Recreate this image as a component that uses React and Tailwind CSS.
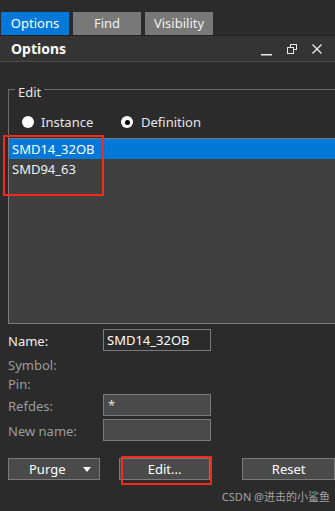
export default function App() {
  return (
    <div className="relative w-[335px] h-[511px] overflow-hidden bg-[#2b2b2b] text-[13px] text-[#e6e6e6] font-['Noto_Sans',sans-serif]">
      {/* Tabs */}
      <div className="flex gap-[4px] pl-[1px] mt-[12px] h-[23px]">
        <div className="w-[68px] bg-[#0078d7] flex items-center justify-center pt-[1px] text-white">Options</div>
        <div className="w-[68px] bg-[#787878] flex items-center justify-center pt-[1px] text-[#f0f0f0]">Find</div>
        <div className="w-[68px] bg-[#787878] flex items-center justify-center pt-[1px] text-[#f0f0f0]">Visibility</div>
      </div>

      {/* Panel header */}
      <div className="h-[27px] bg-[#343434] border-t border-[#222] border-b border-b-[#4a4a4a] flex items-center pl-[11px] pr-[13px]">
        <span className="font-bold text-[14px] text-white">Options</span>
        <div className="ml-auto flex items-center gap-[15px] text-[#e8e8e8]">
          <svg width="11" height="11" viewBox="0 0 11 11" className="mt-[4px] ml-[1px]">
            <rect x="0" y="9" width="11" height="1.5" fill="currentColor" />
          </svg>
          <svg width="10" height="10" viewBox="0 0 10 10">
            <rect x="3.5" y="0.5" width="6" height="5" fill="none" stroke="currentColor" />
            <rect x="0.5" y="3.5" width="6" height="6" fill="#343434" stroke="currentColor" />
          </svg>
          <svg width="10" height="10" viewBox="0 0 10 10">
            <path d="M0.5 0.5 L9.5 9.5 M9.5 0.5 L0.5 9.5" stroke="currentColor" strokeWidth="1.4" />
          </svg>
        </div>
      </div>

      {/* Edit group */}
      <div className="pl-[8px] pt-[27px]">
        <div className="border-l border-t border-[#6c6c6c] pb-[7px]">
          <div className="-mt-[7px] ml-[6px] px-[3px] w-fit bg-[#2b2b2b] leading-[18px]">Edit</div>
          <div className="mt-[12px] h-[18px] flex items-center pl-[13px]">
            <div className="w-[99px] flex items-center gap-[7px]">
              <span className="w-[12px] h-[12px] rounded-full bg-white" />
              <span className="pt-[1px]">Instance</span>
            </div>
            <div className="flex items-center gap-[8px]">
              <span className="w-[12px] h-[12px] rounded-full bg-white flex items-center justify-center">
                <span className="w-[5px] h-[5px] rounded-full bg-black" />
              </span>
              <span className="pt-[1px]">Definition</span>
            </div>
          </div>
        </div>

        {/* List */}
        <div className="w-[330px] h-[186px] border border-[#7a7a7a] bg-[#404040]">
          <div className="h-[20px] bg-[#0078d7] pl-[3px] pt-[2px] flex items-center text-white">SMD14_32OB</div>
          <div className="h-[20px] pl-[3px] pt-[2px] flex items-center text-[#f0f0f0]">SMD94_63</div>
        </div>

        {/* Fields */}
        <div className="mt-[5px] flex flex-col">
          <div className="h-[22px] flex items-center">
            <span className="w-[95px] pt-[3px] text-[#f0f0f0]">Name:</span>
            <div className="w-[108px] h-[22px] border border-[#7a7a7a] pl-[3px] pt-[1px] flex items-center text-white">SMD14_32OB</div>
          </div>
          <div className="mt-[2px] h-[22px] pt-[3px] flex items-center text-[#9c9c9c]">Symbol:</div>
          <div className="h-[16px] pt-[3px] flex items-center text-[#9c9c9c]">Pin:</div>
          <div className="mt-[3px] h-[22px] flex items-center">
            <span className="w-[95px] pt-[3px] text-[#9c9c9c]">Refdes:</span>
            <div className="w-[108px] h-[22px] border border-[#7a7a7a] bg-[#4a4a4a] pl-[4px] pt-[2px] flex items-center text-[#e0e0e0]">*</div>
          </div>
          <div className="mt-[3px] h-[22px] flex items-center">
            <span className="w-[95px] pt-[4px] text-[#9c9c9c]">New name:</span>
            <div className="w-[108px] h-[22px] border border-[#7a7a7a] bg-[#4a4a4a]" />
          </div>
        </div>

        {/* Buttons */}
        <div className="mt-[17px] flex h-[22px]">
          <div className="w-[92px] border border-[#7a7a7a] bg-[#4a4a4a] flex items-center pl-[20px] pr-[8px] text-white">
            <span className="flex-1 pt-[2px]">Purge</span>
            <svg width="8" height="5" viewBox="0 0 8 5"><path d="M0 0 H8 L4 5 Z" fill="white" /></svg>
          </div>
          <div className="ml-[19px] w-[92px] border border-[#7a7a7a] bg-[#4a4a4a] flex items-center justify-center pt-[2px] text-white">Edit...</div>
          <div className="ml-[32px] w-[93px] border border-[#7a7a7a] bg-[#4a4a4a] flex items-center justify-center pt-[2px] text-white">Reset</div>
        </div>

        <div className="mt-[10px] flex justify-end pr-[5px] text-[11px] leading-[14px] text-[#a3a3a3] font-['Noto_Sans','Noto_Sans_CJK_SC',sans-serif]">
          CSDN @进击的小鲨鱼
        </div>
      </div>

      {/* Annotations */}
      <div className="absolute left-[3px] top-[135px] w-[101px] h-[61px] border-2 border-[#f52a1c]" />
      <div className="absolute left-[121px] top-[456px] w-[91px] h-[29px] border-2 border-[#f52a1c]" />
    </div>
  );
}
